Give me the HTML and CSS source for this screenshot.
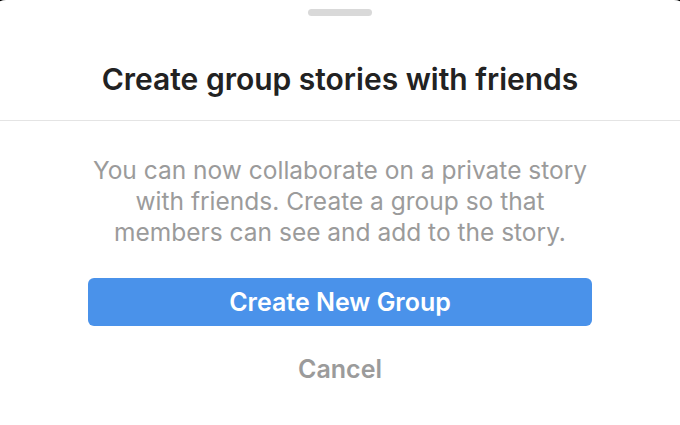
FILE: index.html
```html
<!DOCTYPE html>
<html lang="en">
<head>
    <meta charset="UTF-8">
    <meta name="viewport" content="width=device-width, initial-scale=1.0">
    <title>Group Stories</title>
    <link rel="stylesheet" href="styles.css">
</head>
<body>
    <!-- Bottom Sheet -->
    <div class="sheet">
        <div class="handle"></div>

        <div class="sheet-header">
            <h1>Create group stories with friends</h1>
        </div>

        <div class="sheet-body">
            <p class="description">
                You can now collaborate on a private story<br>
                with friends. Create a group so that<br>
                members can see and add to the story.
            </p>
            <button class="primary-button">Create New Group</button>
            <button class="cancel-button">Cancel</button>
        </div>
    </div>
</body>
</html>
```

FILE: styles.css
```css
/* General Styling */
body {
    font-family: 'Inter', 'Roboto', sans-serif;
    margin: 0;
    padding: 0;
    background: #000000;
}

/* Sheet */
.sheet {
    background: #ffffff;
    height: 425px;
    border-radius: 14px 14px 0 0;
    margin: 0 -8px;
    padding: 0 8px;
    overflow: hidden;
}

.handle {
    width: 64px;
    height: 7px;
    margin: 9px auto 0;
    background-color: #d9d9d9;
    border-radius: 4px;
}

/* Header */
.sheet-header {
    height: 104px;
    display: flex;
    align-items: center;
    justify-content: center;
    border-bottom: 1px solid #e4e4e4;
}

.sheet-header h1 {
    margin: 22px 0 0;
    font-size: 30px;
    font-weight: 600;
    color: #222222;
    letter-spacing: 0;
}

/* Body */
.sheet-body {
    display: flex;
    flex-direction: column;
    align-items: center;
    padding: 0 88px;
}

.description {
    margin: 34px 0 0;
    font-size: 24.5px;
    line-height: 31px;
    color: #9b9b9b;
    text-align: center;
    white-space: nowrap;
}

.primary-button {
    margin-top: 30px;
    width: 100%;
    height: 48px;
    border: none;
    border-radius: 6px;
    background-color: #4a92ea;
    color: #ffffff;
    font-family: inherit;
    font-size: 25px;
    font-weight: 600;
}

.cancel-button {
    margin-top: 28px;
    border: none;
    background: none;
    color: #9b9b9b;
    font-family: inherit;
    font-size: 25px;
    font-weight: 600;
    padding: 0;
}
```
